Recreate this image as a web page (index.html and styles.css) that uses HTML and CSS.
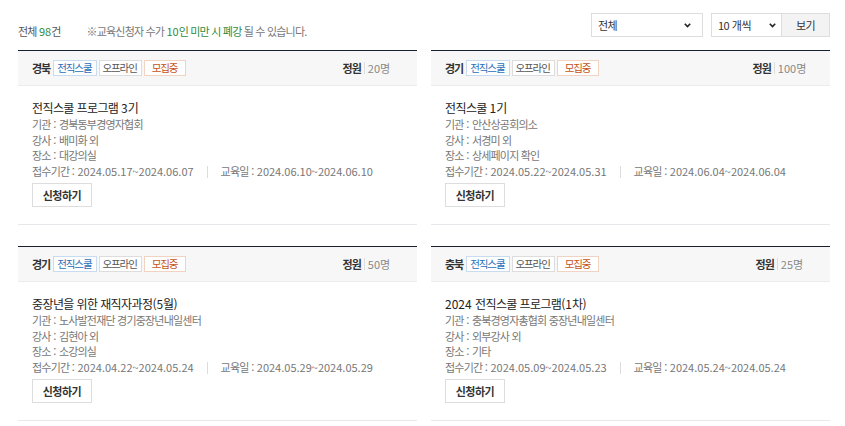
FILE: index.html
```html
<!DOCTYPE html>
<html lang="ko">
<head>
<meta charset="utf-8">
<link rel="stylesheet" href="styles.css">
</head>
<body>
<div class="page">
  <div class="toolbar">
    <div class="summary">
      <span class="total">전체 <em class="green num">98</em>건</span>
      <span class="notice">※교육신청자 수가 <span class="green"><span class="num">10</span>인 미만 시 폐강</span> 될 수 있습니다.</span>
    </div>
    <div class="filters">
      <div class="select-wrap wide">
        <select class="select"><option>전체</option></select>
        <svg class="chev" width="7" height="5" viewBox="0 0 7 5"><path d="M0.8 0.8 L3.5 3.6 L6.2 0.8" fill="none" stroke="#222" stroke-width="1.6"/></svg>
      </div>
      <div class="select-wrap narrow">
        <select class="select"><option>10 개씩</option></select>
        <svg class="chev" width="7" height="5" viewBox="0 0 7 5"><path d="M0.8 0.8 L3.5 3.6 L6.2 0.8" fill="none" stroke="#222" stroke-width="1.6"/></svg>
      </div>
      <button class="view-btn">보기</button>
    </div>
  </div>

  <div class="grid">
    <div class="card">
      <div class="card-head">
        <div class="tags">
          <strong class="region">경북</strong>
          <span class="tag blue">전직스쿨</span>
          <span class="tag gray">오프라인</span>
          <span class="tag orange">모집중</span>
        </div>
        <div class="quota"><strong>정원</strong><i class="bar"></i><span><span class="num">20</span>명</span></div>
      </div>
      <div class="card-body">
        <div class="title">전직스쿨 프로그램 <span class="num">3</span>기</div>
        <div class="info">기관<span class="colon"> : </span>경북동부경영자협회</div>
        <div class="info">강사<span class="colon"> : </span>배미화 외</div>
        <div class="info">장소<span class="colon"> : </span>대강의실</div>
        <div class="info dates"><span>접수기간<span class="colon"> : </span><span class="num">2024.05.17~2024.06.07</span></span><i class="bar"></i><span>교육일<span class="colon"> : </span><span class="num">2024.06.10~2024.06.10</span></span></div>
        <button class="apply">신청하기</button>
      </div>
    </div>

    <div class="card">
      <div class="card-head">
        <div class="tags">
          <strong class="region">경기</strong>
          <span class="tag blue">전직스쿨</span>
          <span class="tag gray">오프라인</span>
          <span class="tag orange">모집중</span>
        </div>
        <div class="quota"><strong>정원</strong><i class="bar"></i><span><span class="num">100</span>명</span></div>
      </div>
      <div class="card-body">
        <div class="title">전직스쿨 <span class="num">1</span>기</div>
        <div class="info">기관<span class="colon"> : </span>안산상공회의소</div>
        <div class="info">강사<span class="colon"> : </span>서경미 외</div>
        <div class="info">장소<span class="colon"> : </span>상세페이지 확인</div>
        <div class="info dates"><span>접수기간<span class="colon"> : </span><span class="num">2024.05.22~2024.05.31</span></span><i class="bar"></i><span>교육일<span class="colon"> : </span><span class="num">2024.06.04~2024.06.04</span></span></div>
        <button class="apply">신청하기</button>
      </div>
    </div>

    <div class="card">
      <div class="card-head">
        <div class="tags">
          <strong class="region">경기</strong>
          <span class="tag blue">전직스쿨</span>
          <span class="tag gray">오프라인</span>
          <span class="tag orange">모집중</span>
        </div>
        <div class="quota"><strong>정원</strong><i class="bar"></i><span><span class="num">50</span>명</span></div>
      </div>
      <div class="card-body">
        <div class="title">중장년을 위한 재직자과정<span class="num">(5</span>월<span class="num">)</span></div>
        <div class="info">기관<span class="colon"> : </span>노사발전재단 경기중장년내일센터</div>
        <div class="info">강사<span class="colon"> : </span>김현아 외</div>
        <div class="info">장소<span class="colon"> : </span>소강의실</div>
        <div class="info dates"><span>접수기간<span class="colon"> : </span><span class="num">2024.04.22~2024.05.24</span></span><i class="bar"></i><span>교육일<span class="colon"> : </span><span class="num">2024.05.29~2024.05.29</span></span></div>
        <button class="apply">신청하기</button>
      </div>
    </div>

    <div class="card">
      <div class="card-head">
        <div class="tags">
          <strong class="region">충북</strong>
          <span class="tag blue">전직스쿨</span>
          <span class="tag gray">오프라인</span>
          <span class="tag orange">모집중</span>
        </div>
        <div class="quota"><strong>정원</strong><i class="bar"></i><span><span class="num">25</span>명</span></div>
      </div>
      <div class="card-body">
        <div class="title"><span class="num">2024 </span>전직스쿨 프로그램<span class="num">(1</span>차<span class="num">)</span></div>
        <div class="info">기관<span class="colon"> : </span>충북경영자총협회 중장년내일센터</div>
        <div class="info">강사<span class="colon"> : </span>외부강사 외</div>
        <div class="info">장소<span class="colon"> : </span>기타</div>
        <div class="info dates"><span>접수기간<span class="colon"> : </span><span class="num">2024.05.09~2024.05.23</span></span><i class="bar"></i><span>교육일<span class="colon"> : </span><span class="num">2024.05.24~2024.05.24</span></span></div>
        <button class="apply">신청하기</button>
      </div>
    </div>
  </div>
</div>
</body>
</html>
```

FILE: styles.css
```css
* { box-sizing: border-box; }
html, body { margin: 0; padding: 0; background: #fff; }
body {
  font-family: "Noto Sans CJK KR", "Noto Sans", sans-serif;
  font-size: 11px;
  letter-spacing: -0.8px;
  color: #666;
}
.num { letter-spacing: 0; }
.colon { letter-spacing: 0; word-spacing: -0.5px; }
.page { padding: 13px 15px 0 18px; }

.toolbar {
  display: flex;
  justify-content: space-between;
  align-items: flex-start;
  margin-bottom: 11px;
}
.summary { padding-top: 10px; line-height: 16px; display: flex; }
.total { color: #555; margin-right: 26px; }
.green { color: #2e8b3e; font-style: normal; }
.notice { color: #777; }

.filters { display: flex; }
.select-wrap { position: relative; height: 24px; }
.select-wrap.wide { width: 112px; margin-right: 8px; }
.select-wrap.narrow { width: 71px; }
.select {
  appearance: none;
  -webkit-appearance: none;
  width: 100%;
  height: 24px;
  border: 1px solid #ddd;
  background: #fff;
  font-family: inherit;
  font-size: 11px;
  letter-spacing: -0.5px;
  color: #333;
  padding: 0 6px;
  margin: 0;
  border-radius: 0;
}
.chev { position: absolute; right: 12px; top: 10px; }
.narrow .chev { right: 6px; }
.view-btn {
  height: 24px;
  width: 48px;
  border: 1px solid #ddd;
  border-left: none;
  background: #f3f3f3;
  font-family: inherit;
  font-size: 11px;
  letter-spacing: -0.5px;
  color: #333;
  padding: 0;
}

.grid {
  display: grid;
  grid-template-columns: 399px 399px;
  column-gap: 14px;
  row-gap: 21px;
}
.card {
  border-top: 1px solid #17202e;
  border-bottom: 1px solid #e6e8ec;
}
.card-head {
  height: 35px;
  background: #f7f7f7;
  border-bottom: 1px solid #ececec;
  display: flex;
  align-items: center;
  justify-content: space-between;
  padding: 0 14px 0 14px;
}
.tags { display: flex; align-items: center; }
.region { color: #333; font-weight: 700; margin-right: 3px; letter-spacing: -1px; }
.tag {
  height: 16px;
  line-height: 14px;
  border: 1px solid;
  padding: 0 4px 0 3px;
  margin-right: 2px;
  background: #fff;
  font-size: 10.5px;
  letter-spacing: -1.1px;
}
.tag.blue { color: #2a6fb8; border-color: #c9dcef; }
.tag.gray { color: #555; border-color: #ddd; }
.tag.orange { color: #c65418; border-color: #f1d3c2; padding: 0 8px 0 7px; }

.quota { display: flex; align-items: center; justify-content: center; width: 74px; }
.quota strong { color: #333; font-weight: 700; letter-spacing: -1px; }
.quota span { color: #888; }
.bar {
  display: inline-block;
  width: 1px;
  height: 12px;
  background: #ddd;
  margin: 0 3px;
}

.card-body { padding: 13px 14px 17px; }
.title {
  font-size: 12px;
  line-height: 18px;
  letter-spacing: -0.6px;
  color: #222;
  margin-bottom: 0;
}
.info { line-height: 15.7px; color: #777; }
.dates { display: flex; align-items: center; }
.dates .bar { margin: 0 13px; }
.apply {
  display: block;
  margin-top: 3px;
  height: 24px;
  width: 60px;
  border: 1px solid #ddd;
  background: #fff;
  font-family: inherit;
  font-size: 11px;
  letter-spacing: -0.5px;
  font-weight: 700;
  color: #333;
  padding: 0;
}
```
